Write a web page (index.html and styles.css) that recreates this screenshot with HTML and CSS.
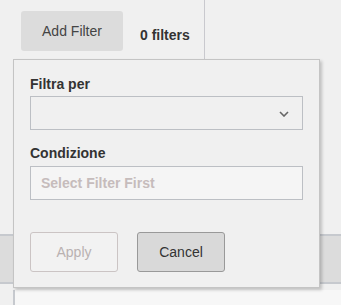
FILE: index.html
```html
<!DOCTYPE html>
<html lang="en">
<head>
    <meta charset="UTF-8">
    <meta name="viewport" content="width=device-width, initial-scale=1.0">
    <title>Filters</title>
    <link rel="stylesheet" href="styles.css">
</head>
<body>
    <div class="toolbar">
        <div class="toolbar-cell">
            <button class="add-filter">Add Filter</button>
            <span class="filter-count">0 filters</span>
        </div>
    </div>

    <div class="table-area">
        <div class="table-head"></div>
        <div class="table-body"></div>
    </div>

    <div class="filter-popup">
        <label class="field-label">Filtra per</label>
        <div class="select-box">
            <svg class="chevron" width="10" height="6" viewBox="0 0 10 6">
                <path d="M1 1 L5 5 L9 1" fill="none" stroke="#666" stroke-width="1.6"/>
            </svg>
        </div>

        <label class="field-label second">Condizione</label>
        <input class="text-box" type="text" placeholder="Select Filter First" disabled>

        <div class="popup-actions">
            <button class="btn btn-apply" disabled>Apply</button>
            <button class="btn btn-cancel">Cancel</button>
        </div>
    </div>
</body>
</html>
```

FILE: styles.css
```css
body {
    margin: 0;
    background-color: #f0f0f0;
    font-family: "Liberation Sans", Arial, sans-serif;
    font-size: 14px;
    color: #333;
}

.toolbar {
    height: 59px;
}

.toolbar-cell {
    width: 205px;
    height: 59px;
    border-right: 1px solid #c9c9ce;
    display: flex;
    align-items: flex-start;
    padding: 11px 0 0 21px;
    box-sizing: border-box;
}

.add-filter {
    width: 102px;
    height: 40px;
    background-color: #dcdcdc;
    border: none;
    border-radius: 3px;
    font-family: inherit;
    font-size: 14px;
    color: #444;
    padding: 0;
}

.filter-count {
    margin: 16px 0 0 17px;
    font-weight: bold;
    line-height: 16px;
    color: #333;
}

.table-area {
    margin-top: 175px;
}

.table-head {
    height: 46px;
    background-color: #dcdcdc;
    border-top: 2px solid #c6c9ce;
    border-bottom: 2px solid #c6c9ce;
}

.table-body {
    margin: 6px 0 0 13px;
    height: 15px;
    border-left: 2px solid #c6c9ce;
    background-color: #f7f7f7;
}

.filter-popup {
    position: absolute;
    left: 13px;
    top: 59px;
    width: 307px;
    height: 229px;
    padding: 16px 16px 0 16px;
    box-sizing: border-box;
    background-color: #f0f0f0;
    border: 1px solid #c4c4c4;
    box-shadow: 2px 2px 3px rgba(0, 0, 0, 0.2);
}

.field-label {
    display: block;
    font-weight: bold;
    line-height: 16px;
    color: #333;
}

.field-label.second {
    margin-top: 15px;
}

.select-box {
    margin-top: 4px;
    height: 34px;
    border: 1px solid #bcbfc4;
    box-sizing: border-box;
    display: flex;
    align-items: center;
    justify-content: flex-end;
    padding-right: 13px;
}

.chevron {
    display: block;
    margin-top: 2px;
}

.text-box {
    display: block;
    margin-top: 5px;
    width: 100%;
    height: 34px;
    box-sizing: border-box;
    border: 1px solid #bcbfc4;
    background-color: #f5f5f5;
    padding: 0 10px;
    font-family: inherit;
    font-size: 14px;
    font-weight: bold;
}

.text-box::placeholder {
    color: #c6bcbc;
}

.popup-actions {
    display: flex;
    gap: 19px;
    margin-top: 32px;
}

.btn {
    width: 88px;
    height: 40px;
    border-radius: 3px;
    font-family: inherit;
    font-size: 14px;
    padding: 0;
}

.btn-apply {
    background-color: #f2f2f2;
    border: 1px solid #cbc4c4;
    color: #b9b1b1;
}

.btn-cancel {
    background-color: #d9d9d9;
    border: 1px solid #999;
    color: #333;
}
```
